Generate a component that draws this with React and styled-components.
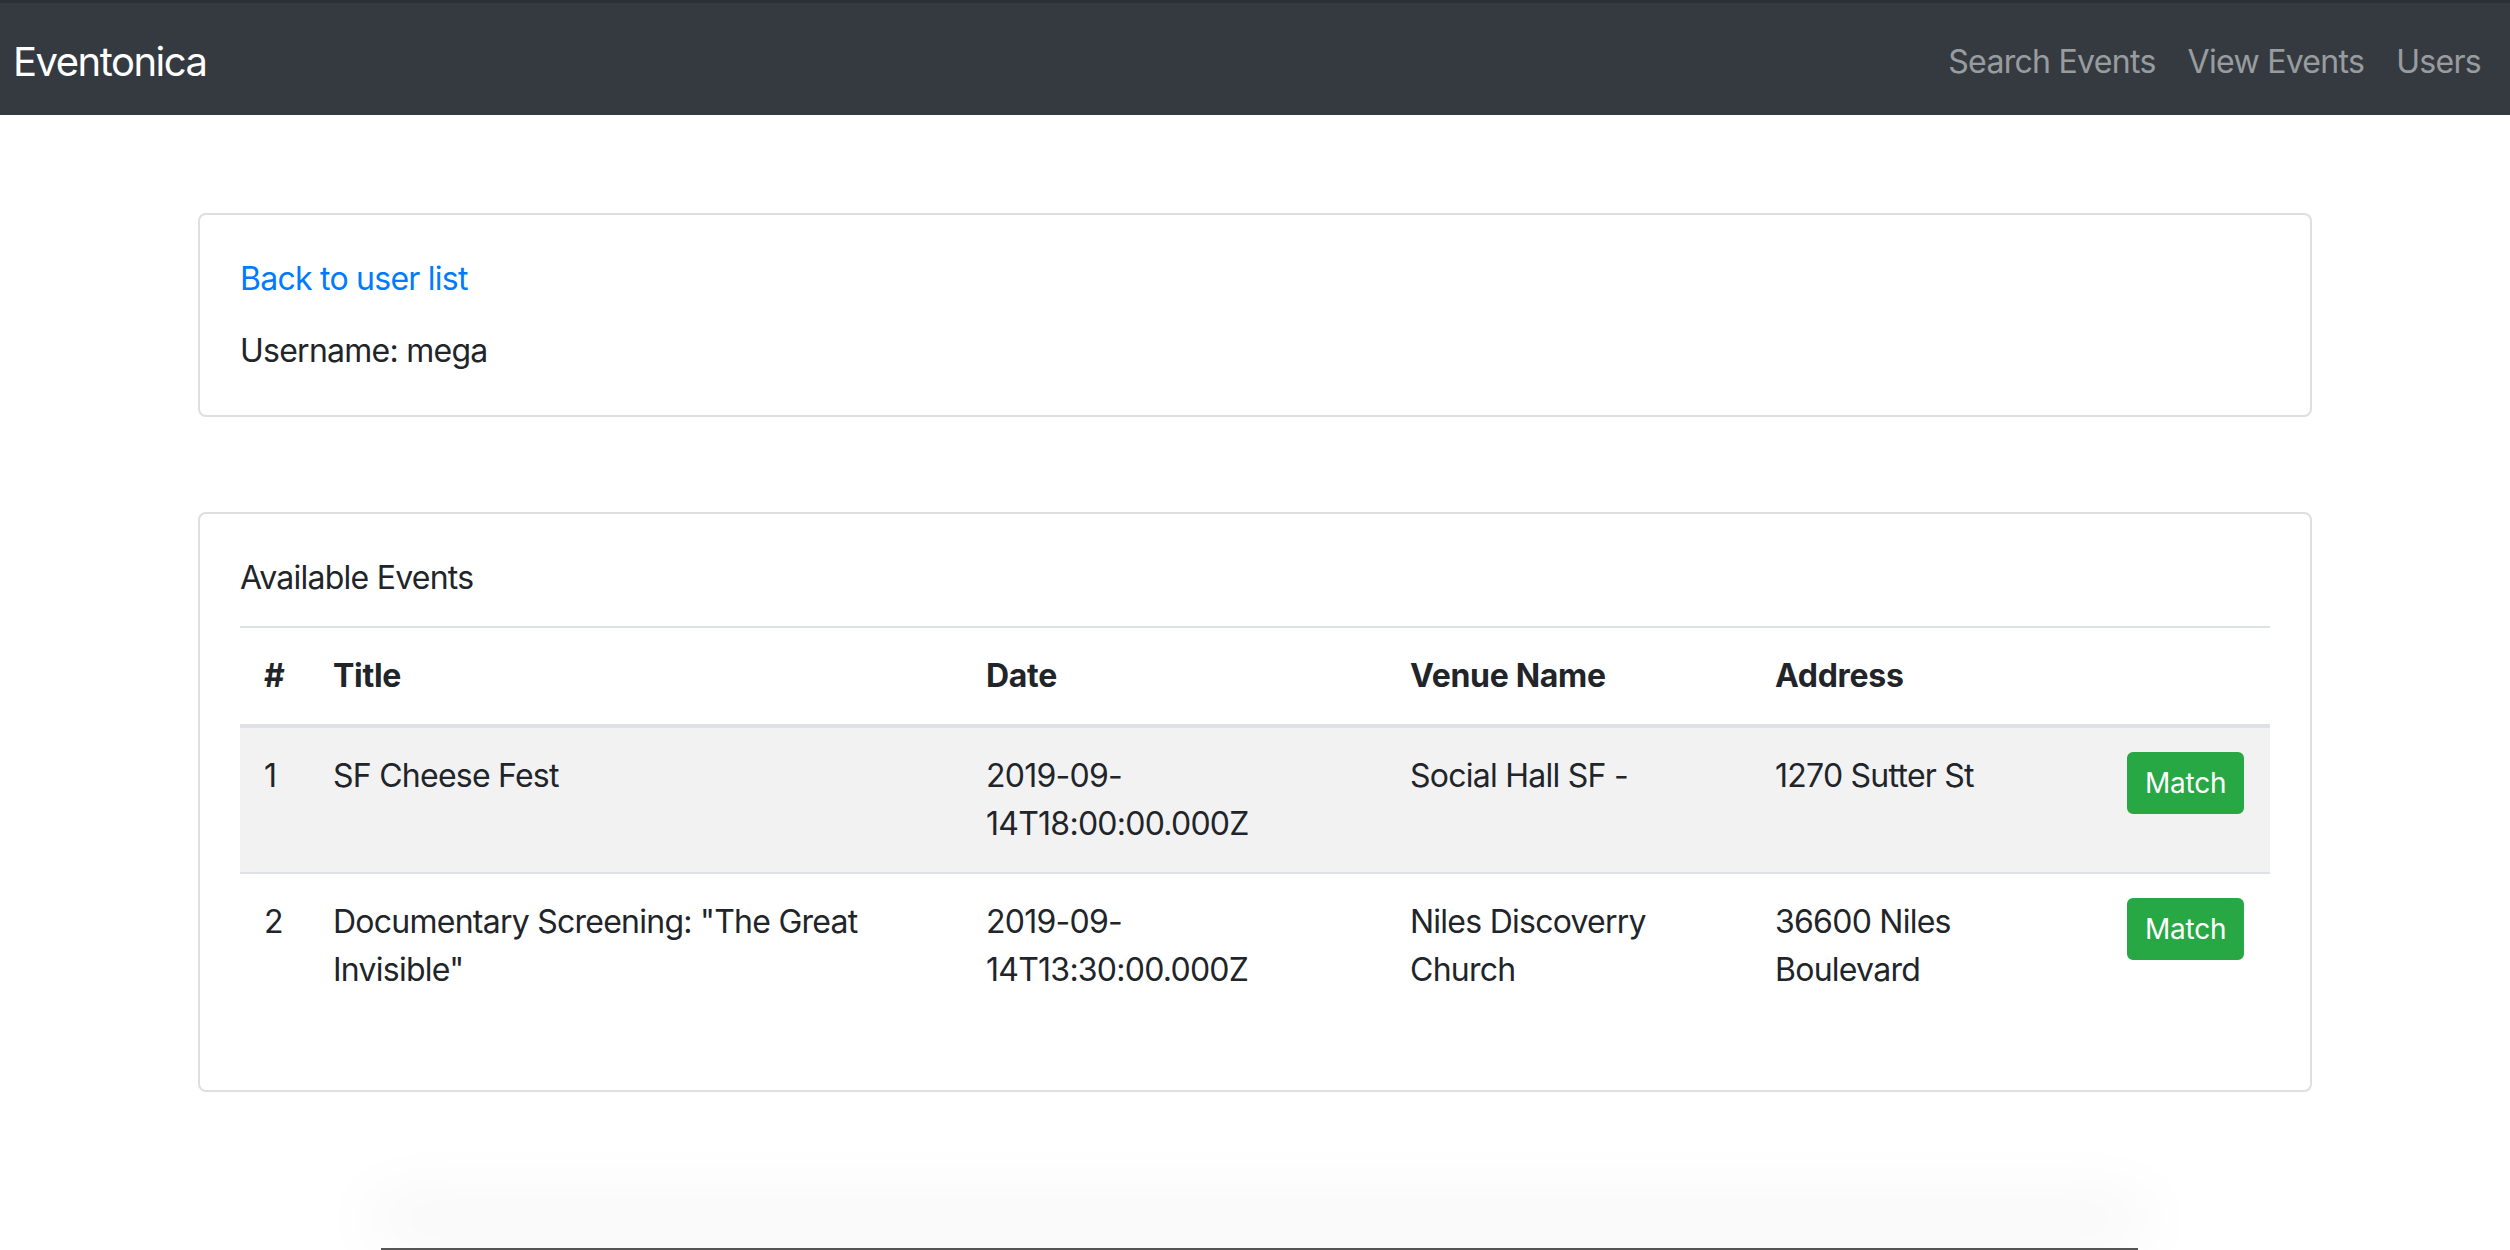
import React from "react";
import styled, { createGlobalStyle } from "styled-components";

const Global = createGlobalStyle`
  *, *::before, *::after { box-sizing: border-box; }
  html, body { margin: 0; padding: 0; overflow: hidden; }
  body {
    font-family: Inter, "Liberation Sans", Arial, sans-serif;
    font-size: 32px;
    line-height: 1.5;
    color: #212529;
    background: #fff;
  }
`;

const NavBar = styled.nav`
  height: 115px;
  border-top: 3px solid #2c2f33;
  background: #343a40;
  display: flex;
  align-items: center;
  justify-content: space-between;
  padding: 5px 13px 0;
`;

const Brand = styled.a`
  font-size: 40px;
  line-height: 1.5;
  color: #fff;
  text-decoration: none;
  letter-spacing: -1.5px;
`;

const NavLinks = styled.div`
  display: flex;
`;

const NavLink = styled.a`
  padding: 0 16px;
  font-size: 32px;
  color: rgba(255, 255, 255, 0.5);
  text-decoration: none;
  letter-spacing: -0.7px;
`;

const Container = styled.main`
  width: 2114px;
  margin: 0 auto;
  display: flex;
  flex-direction: column;
`;

const Card = styled.section`
  margin-top: ${(p) => p.$top}px;
  border: 2px solid rgba(0, 0, 0, 0.125);
  border-radius: 8px;
  padding: 40px;
  background: #fff;
`;

const BackLink = styled.a`
  display: block;
  color: #007bff;
  text-decoration: none;
  margin-bottom: 24px;
  letter-spacing: -0.75px;
`;

const Text = styled.p`
  margin: 0 0 ${(p) => p.$mb || 0}px;
  letter-spacing: -0.75px;
`;

const Table = styled.table`
  width: 100%;
  border-collapse: collapse;
  table-layout: fixed;
  margin-bottom: 32px;
  letter-spacing: -0.75px;
`;

const Th = styled.th`
  padding: 24px;
  text-align: left;
  font-weight: 700;
  vertical-align: bottom;
  letter-spacing: -0.3px;
  border-top: 2px solid #dee2e6;
  border-bottom: 4px solid #dee2e6;
`;

const Row = styled.tr`
  background: ${(p) => (p.$striped ? "rgba(0,0,0,0.05)" : "transparent")};
`;

const Td = styled.td`
  padding: 24px;
  vertical-align: top;
  border-top: 2px solid #dee2e6;
`;

const MatchButton = styled.button`
  font-family: inherit;
  font-size: 28px;
  line-height: 1.5;
  padding: 8px 16px;
  color: #fff;
  background: #28a745;
  border: 2px solid #28a745;
  border-radius: 6px;
  letter-spacing: -0.2px;
  cursor: pointer;
`;

const Footer = styled.div`
  width: 1757px;
  height: 2px;
  margin: 156px 0 0 381px;
  background: #555;
  box-shadow: 0 -30px 70px 10px rgba(0, 0, 0, 0.09);
`;

const cols = [69, 653, 424, 365, 352, 167];

const events = [
  {
    id: 1,
    title: "SF Cheese Fest",
    date: "2019-09-14T18:00:00.000Z",
    venue: "Social Hall SF -",
    address: "1270 Sutter St",
  },
  {
    id: 2,
    title: 'Documentary Screening: "The Great Invisible"',
    date: "2019-09-14T13:30:00.000Z",
    venue: "Niles Discoverry Church",
    address: "36600 Niles Boulevard",
  },
];

export default function App() {
  return (
    <>
      <Global />
      <NavBar>
        <Brand href="#">Eventonica</Brand>
        <NavLinks>
          <NavLink href="#">Search Events</NavLink>
          <NavLink href="#">View Events</NavLink>
          <NavLink href="#">Users</NavLink>
        </NavLinks>
      </NavBar>
      <Container>
        <Card $top={98}>
          <BackLink href="#">Back to user list</BackLink>
          <Text>Username: mega</Text>
        </Card>
        <Card $top={95}>
          <Text $mb={24}>Available Events</Text>
          <Table>
            <colgroup>
              {cols.map((w, i) => (
                <col key={i} style={{ width: w }} />
              ))}
            </colgroup>
            <thead>
              <tr>
                <Th>#</Th>
                <Th>Title</Th>
                <Th>Date</Th>
                <Th>Venue Name</Th>
                <Th>Address</Th>
                <Th></Th>
              </tr>
            </thead>
            <tbody>
              {events.map((e, i) => (
                <Row key={e.id} $striped={i % 2 === 0}>
                  <Td>{e.id}</Td>
                  <Td>{e.title}</Td>
                  <Td>{e.date}</Td>
                  <Td>{e.venue}</Td>
                  <Td>{e.address}</Td>
                  <Td>
                    <MatchButton>Match</MatchButton>
                  </Td>
                </Row>
              ))}
            </tbody>
          </Table>
        </Card>
      </Container>
      <Footer />
    </>
  );
}
